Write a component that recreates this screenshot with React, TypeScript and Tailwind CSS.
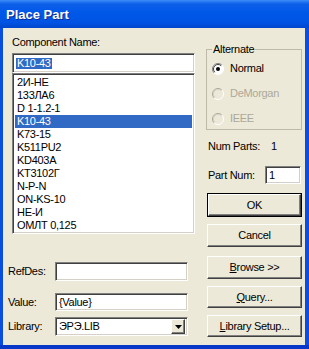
import React from 'react';

const sunken =
  'bg-white border border-t-[#808080] border-l-[#808080] border-b-white border-r-white shadow-[inset_1px_1px_0_#404040,inset_-1px_-1px_0_#d4d0c8]';

const raised =
  'bg-[#ece9d8] border border-t-white border-l-white border-b-[#404040] border-r-[#404040] shadow-[inset_-1px_-1px_0_#808080]';

const parts = [
  '2И-НЕ',
  '133ЛА6',
  'D 1-1.2-1',
  'K10-43',
  'K73-15',
  'K511PU2',
  'KD403A',
  'KT3102Г',
  'N-P-N',
  'ON-KS-10',
  'НЕ-И',
  'ОМЛТ 0,125',
];

function Radio({ checked, disabled }: { checked?: boolean; disabled?: boolean }) {
  return (
    <svg width="12" height="12" viewBox="0 0 12 12" className="shrink-0">
      <circle cx="6" cy="6" r="5.5" fill={disabled ? '#ece9d8' : '#ffffff'} />
      <path d="M2.1 9.9 A5.5 5.5 0 0 1 9.9 2.1" stroke={disabled ? '#aca899' : '#808080'} fill="none" />
      <path d="M2.8 9.2 A4.5 4.5 0 0 1 9.2 2.8" stroke={disabled ? '#d4d0c8' : '#404040'} fill="none" />
      <path d="M9.9 2.1 A5.5 5.5 0 0 1 2.1 9.9" stroke="#ffffff" fill="none" />
      {checked && <circle cx="6" cy="6" r="2" fill="#000000" />}
    </svg>
  );
}

function Button({ children, def, className }: { children: React.ReactNode; def?: boolean; className: string }) {
  if (def) {
    return (
      <div className={`ml-[1px] w-[95px] border border-black ${className}`}>
        <div className={`h-full flex items-center justify-center ${raised}`}>{children}</div>
      </div>
    );
  }
  return <div className={`ml-[1px] w-[95px] flex items-center justify-center ${raised} ${className}`}>{children}</div>;
}

export default function App() {
  return (
    <div className="w-[309px] h-[349px] flex flex-col bg-[#0a4ee0] font-['Liberation_Sans',Arial,sans-serif] text-[11px] leading-[13px] tracking-[-0.3px] text-black select-none">
      <div className="h-[28px] shrink-0 flex items-center pl-[6px] bg-[linear-gradient(to_bottom,#3d8ef8_0%,#0d5fea_14%,#0058e8_45%,#0054e3_80%,#0046cc_100%)]">
        <span className="text-white font-bold text-[13px] tracking-normal [text-shadow:1px_1px_0_#0a2a9a]">Place Part</span>
      </div>

      <div className="flex flex-1 min-h-0">
        <div className="w-[3px] shrink-0 bg-[#0a4ee0]" />
        <div className="flex-1 bg-[#ece9d8] pl-[5px] pt-[8px] flex">
          {/* left column */}
          <div className="w-[188px] flex flex-col">
            <div className="ml-[4px] h-[13px]">Component Name:</div>
            <div className={`ml-[4px] mt-[4px] w-[183px] h-[20px] flex items-center pl-[3px] ${sunken}`}>
              <span className="bg-[#316ac5] text-white leading-[11px] px-[1px]">K10-43</span>
            </div>
            <div className={`ml-[4px] w-[183px] h-[161px] p-[2px] ${sunken}`}>
              {parts.map((p) => (
                <div
                  key={p}
                  className={`h-[13px] pl-[2px] whitespace-nowrap ${p === 'K10-43' ? 'bg-[#316ac5] text-white' : ''}`}
                >
                  {p}
                </div>
              ))}
            </div>

            <div className="mt-[28px] h-[19px] flex items-center">
              <span className="w-[47px]">RefDes:</span>
              <div className={`w-[133px] h-full ${sunken}`} />
            </div>
            <div className="mt-[12px] h-[18px] flex items-center">
              <span className="w-[47px]">Value:</span>
              <div className={`w-[133px] h-full flex items-center pl-[3px] ${sunken}`}>{'{Value}'}</div>
            </div>
            <div className="mt-[6px] h-[19px] flex items-center">
              <span className="w-[47px]">Library:</span>
              <div className={`w-[133px] h-full flex items-center pl-[3px] pr-[2px] ${sunken}`}>
                <span className="flex-1">ЭРЭ.LIB</span>
                <div className={`w-[14px] h-[15px] flex items-center justify-center ${raised}`}>
                  <svg width="7" height="4" viewBox="0 0 7 4">
                    <path d="M0 0 H7 L3.5 4 Z" fill="#000" />
                  </svg>
                </div>
              </div>
            </div>
          </div>

          {/* right column */}
          <div className="ml-[10px] w-[96px] flex flex-col">
            <fieldset className="mt-[7px] h-[87px] border border-[#bdbaa9] pl-[5px] pb-0">
              <legend className="px-[1px] leading-[13px]">Alternate</legend>
              <div className="pt-[6px] flex flex-col gap-[12px]">
                <div className="h-[13px] flex items-center gap-[6px]">
                  <Radio checked />
                  <span>Normal</span>
                </div>
                <div className="h-[13px] flex items-center gap-[6px] text-[#aca899]">
                  <Radio disabled />
                  <span>DeMorgan</span>
                </div>
                <div className="h-[13px] flex items-center gap-[6px] text-[#aca899]">
                  <Radio disabled />
                  <span>IEEE</span>
                </div>
              </div>
            </fieldset>

            <div className="mt-[10px] h-[13px] flex pl-[2px]">
              <span className="w-[63px]">Num Parts:</span>
              <span>1</span>
            </div>
            <div className="mt-[13px] h-[18px] flex items-center pl-[2px]">
              <span className="w-[57px]">Part Num:</span>
              <div className={`w-[36px] h-full flex items-center pl-[3px] ${sunken}`}>1</div>
            </div>

            <Button def className="mt-[9px] h-[24px]">OK</Button>
            <Button className="mt-[7px] h-[23px]">Cancel</Button>
            <Button className="mt-[9px] h-[23px]">
              <span>
                <u>B</u>rowse &gt;&gt;
              </span>
            </Button>
            <Button className="mt-[7px] h-[22px]">
              <span>
                <u>Q</u>uery...
              </span>
            </Button>
            <Button className="mt-[7px] h-[22px]">
              <span>
                <u>L</u>ibrary Setup...
              </span>
            </Button>
          </div>
        </div>
        <div className="w-[4px] shrink-0 bg-[#0a4ee0]" />
      </div>
      <div className="h-[4px] shrink-0 bg-[#0838c8]" />
    </div>
  );
}
